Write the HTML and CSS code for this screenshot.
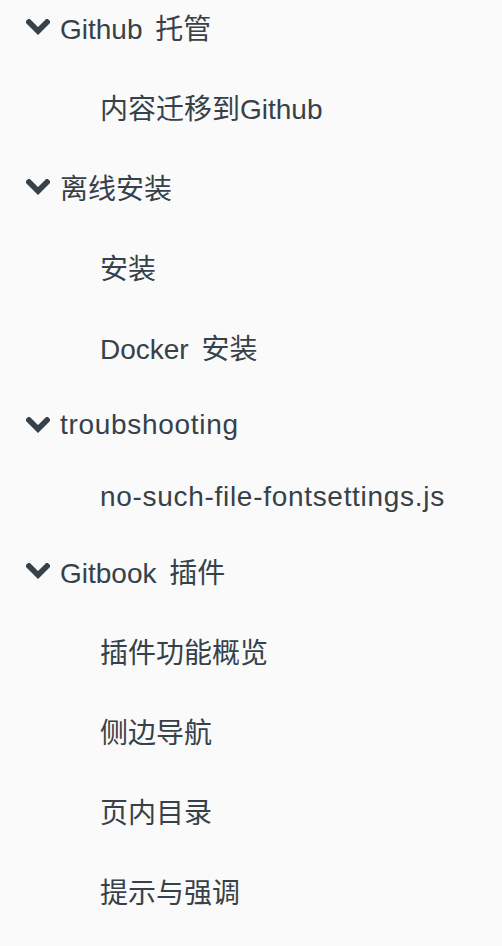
FILE: index.html
```html
<!DOCTYPE html>
<html lang="zh">
<head>
<meta charset="utf-8">
<link rel="stylesheet" href="styles.css">
</head>
<body>
<ul class="summary">
  <li class="row chapter"><svg class="chev" viewBox="0 0 24 16"><polyline points="3,3 12,12 21,3"/></svg><span>Github 托管</span></li>
  <li class="row article"><span>内容迁移到Github</span></li>
  <li class="row chapter"><svg class="chev" viewBox="0 0 24 16"><polyline points="3,3 12,12 21,3"/></svg><span>离线安装</span></li>
  <li class="row article"><span>安装</span></li>
  <li class="row article"><span>Docker 安装</span></li>
  <li class="row chapter latin"><svg class="chev" viewBox="0 0 24 16"><polyline points="3,3 12,12 21,3"/></svg><span>troubshooting</span></li>
  <li class="row article latin"><span>no-such-file-fontsettings.js</span></li>
  <li class="row chapter"><svg class="chev" viewBox="0 0 24 16"><polyline points="3,3 12,12 21,3"/></svg><span>Gitbook 插件</span></li>
  <li class="row article"><span>插件功能概览</span></li>
  <li class="row article"><span>侧边导航</span></li>
  <li class="row article"><span>页内目录</span></li>
  <li class="row article"><span>提示与强调</span></li>
</ul>
</body>
</html>
```
FILE: styles.css
```css
html, body {
  margin: 0;
  padding: 0;
  background: #fafafa;
}
body {
  font-family: "Liberation Sans", "Noto Sans CJK SC", sans-serif;
  font-size: 28px;
  color: #364149;
  overflow: hidden;
}
.summary {
  list-style: none;
  margin: -13px 0 0 0;
  padding: 0;
}
.row {
  box-sizing: border-box;
  height: 80px;
  display: flex;
  align-items: center;
  white-space: nowrap;
  word-spacing: 5px;
}
.row.latin {
  height: 72px;
  padding-top: 4px;
}
.row.latin span {
  letter-spacing: 0.7px;
}
.chapter {
  padding-left: 26px;
  gap: 10px;
}
.article {
  padding-left: 100px;
}
.chev {
  width: 24px;
  height: 16px;
  flex: none;
}
.chev polyline {
  fill: none;
  stroke: #364149;
  stroke-width: 5.5;
  stroke-linecap: square;
  stroke-linejoin: miter;
}
```
